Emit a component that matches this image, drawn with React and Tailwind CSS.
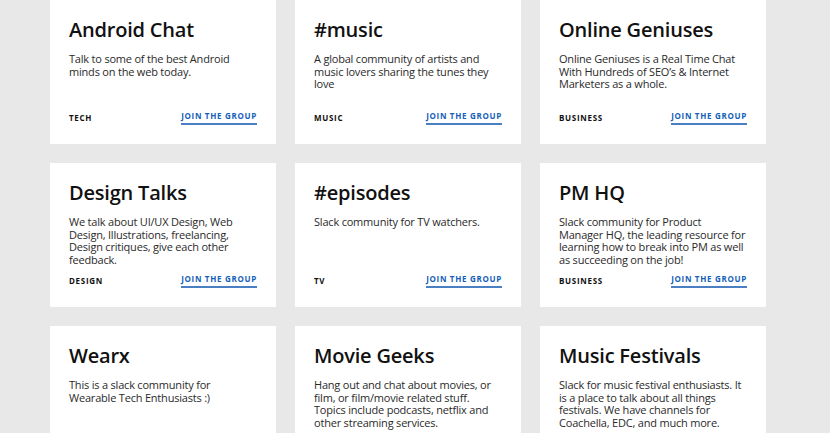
const groups = [
  {
    name: 'Android Chat',
    description: 'Talk to some of the best Android minds on the web today.',
    tag: 'Tech',
  },
  {
    name: '#music',
    description: 'A global community of artists and music lovers sharing the tunes they love',
    tag: 'Music',
  },
  {
    name: 'Online Geniuses',
    description: 'Online Geniuses is a Real Time Chat With Hundreds of SEO’s & Internet Marketers as a whole.',
    tag: 'Business',
  },
  {
    name: 'Design Talks',
    description: 'We talk about UI/UX Design, Web Design, Illustrations, freelancing, Design critiques, give each other feedback.',
    tag: 'Design',
  },
  {
    name: '#episodes',
    description: 'Slack community for TV watchers.',
    tag: 'TV',
  },
  {
    name: 'PM HQ',
    description: 'Slack community for Product Manager HQ, the leading resource for learning how to break into PM as well as succeeding on the job!',
    tag: 'Business',
  },
  {
    name: 'Wearx',
    description: 'This is a slack community for Wearable Tech Enthusiasts :)',
    tag: 'Tech',
  },
  {
    name: 'Movie Geeks',
    description: 'Hang out and chat about movies, or film, or film/movie related stuff. Topics include podcasts, netflix and other streaming services.',
    tag: 'Entertainment',
  },
  {
    name: 'Music Festivals',
    description: 'Slack for music festival enthusiasts. It is a place to talk about all things festivals. We have channels for Coachella, EDC, and much more.',
    tag: 'Music',
  },
]

function GroupCard({ group }) {
  return (
    <div className="flex h-[144px] flex-col bg-white px-[19px] pt-[16px] pb-[19px]">
      <h3 className="text-[20px] leading-[28px] font-semibold tracking-[-0.2px] text-[#111]">{group.name}</h3>
      <p className="mt-[9px] -mr-[1px] text-[11px] leading-[12.7px] tracking-[-0.2px] text-[#2a2a2a]">
        {group.description}
      </p>
      <div className="mt-auto flex items-end justify-between">
        <span className="mb-[2px] text-[8px] leading-[10px] font-bold tracking-[0.7px] text-[#111] uppercase">
          {group.tag}
        </span>
        <a
          href="#"
          className="border-b-2 border-[#4a7fc3] pb-[2px] text-[8px] leading-[10px] font-bold tracking-[0.7px] text-[#1560b8] uppercase"
        >
          Join the group
        </a>
      </div>
    </div>
  )
}

export default function App() {
  return (
    <div
      className="h-[433px] w-[830px] overflow-hidden bg-[#e8e8e8] pl-[50px]"
      style={{ fontFamily: '"Open Sans", "Noto Sans", sans-serif' }}
    >
      <div className="grid w-[716px] grid-cols-[226px_226px_226px] gap-x-[19px] gap-y-[19px]">
        {groups.map((group) => (
          <GroupCard key={group.name} group={group} />
        ))}
      </div>
    </div>
  )
}
